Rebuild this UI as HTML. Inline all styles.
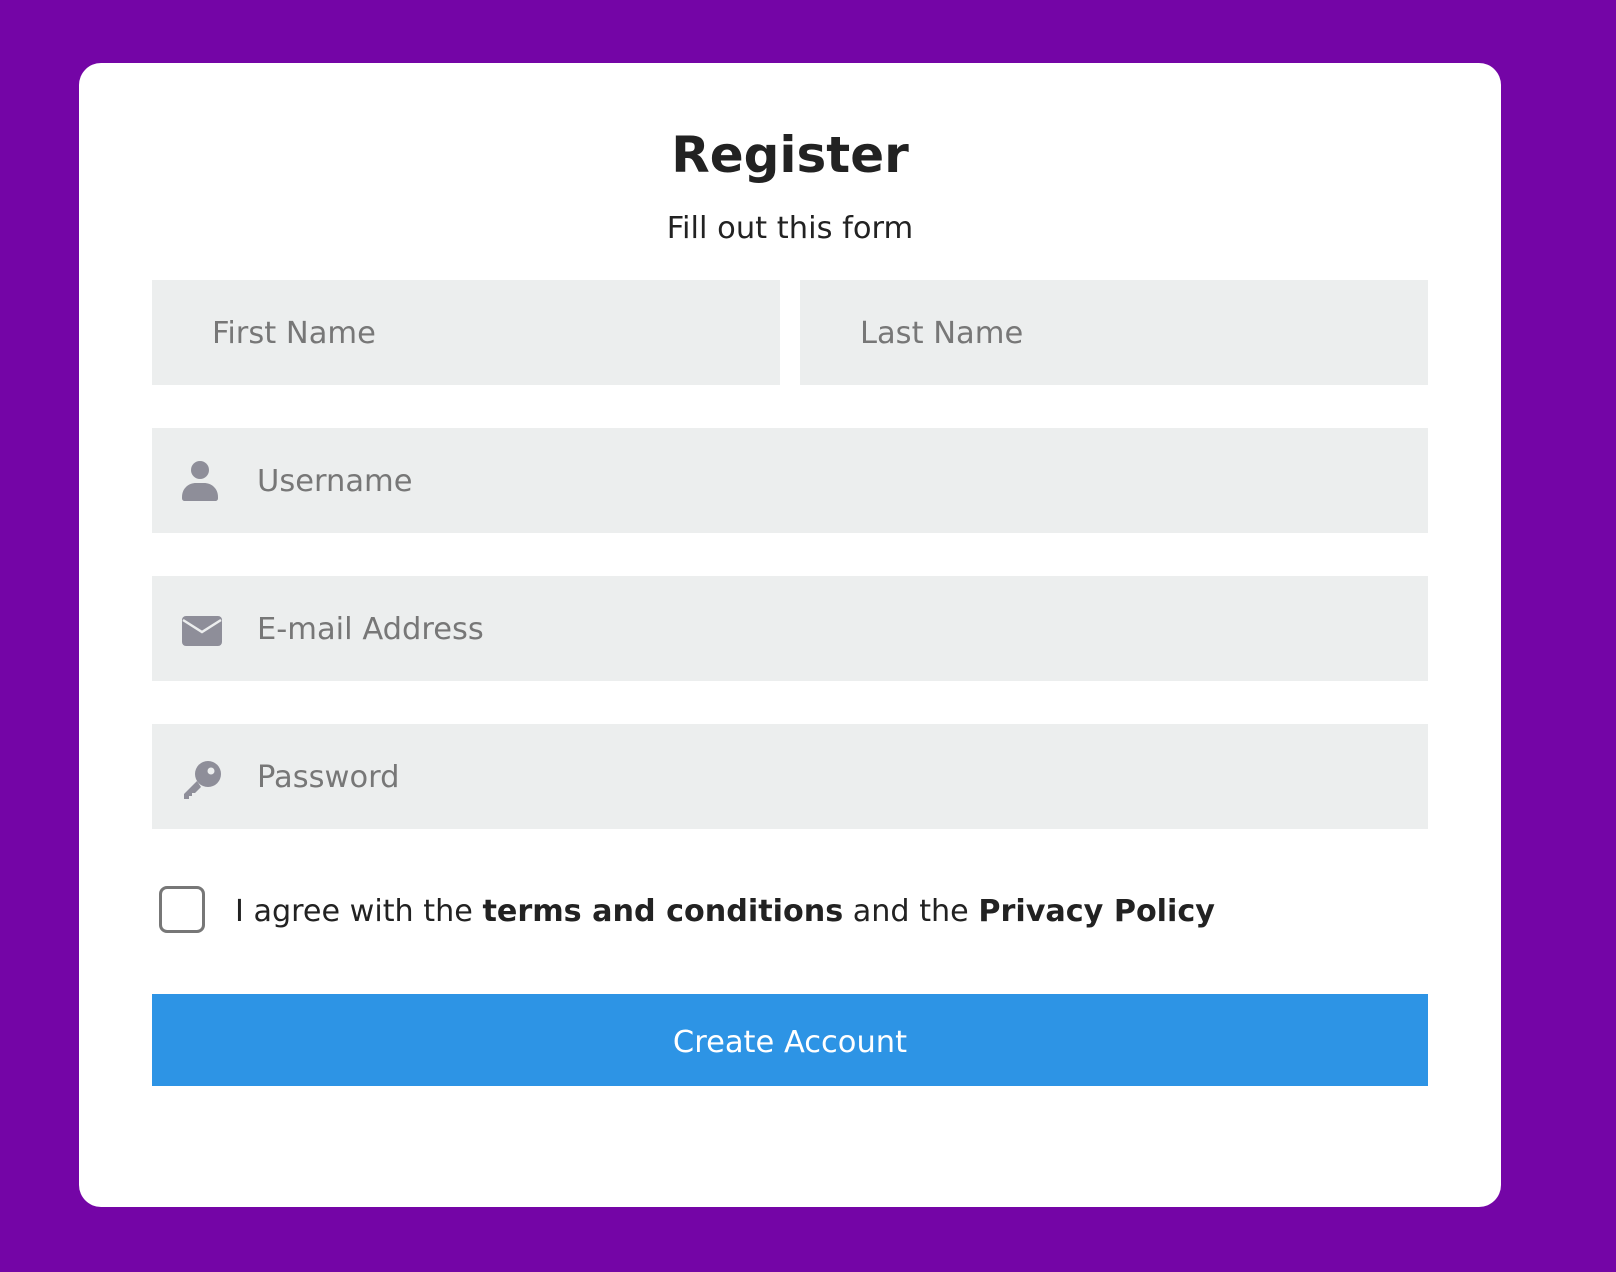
<!DOCTYPE html>
<html><head><meta charset="utf-8"><style>
*{margin:0;padding:0;box-sizing:border-box}
body{width:1616px;height:1272px;background:#7405a6;font-family:"DejaVu Sans","Liberation Sans",sans-serif;position:relative;overflow:hidden}
.card{position:absolute;left:79px;top:63px;width:1422px;height:1144px;background:#fff;border-radius:22px}
.abs{position:absolute}
h1{position:absolute;left:0;width:1580px;top:122px;text-align:center;font-size:50px;font-weight:bold;color:#222;line-height:66px}
.sub{position:absolute;left:0;width:1580px;top:211px;text-align:center;font-size:30.5px;color:#222;line-height:36px}
.in{position:absolute;background:#eceeee;color:#777;font-size:30.5px;line-height:40px}
.in span{position:absolute;top:50%;transform:translateY(-48%)}
.in svg{position:absolute}
</style></head><body>
<div class="card"></div>
<h1>Register</h1>
<div class="sub">Fill out this form</div>
<div class="in" style="left:152px;top:280px;width:628px;height:105px"><span style="left:60px">First Name</span></div>
<div class="in" style="left:800px;top:280px;width:628px;height:105px"><span style="left:60px">Last Name</span></div>
<div class="in" style="left:152px;top:428px;width:1276px;height:105px">
<svg style="left:30px;top:33px" width="36" height="40" viewBox="0 0 36 40"><circle cx="18" cy="9" r="9" fill="#8e8e99"/><path d="M0 36c0-9 7-14 14-14h8c7 0 14 5 14 14v1c0 2-1 3-3 3H3c-2 0-3-1-3-3z" fill="#8e8e99"/></svg>
<span style="left:105px">Username</span></div>
<div class="in" style="left:152px;top:576px;width:1276px;height:105px">
<svg style="left:30px;top:40px" width="40" height="30" viewBox="0 0 40 30"><rect x="0" y="0" width="40" height="30" rx="4" fill="#8e8e99"/><path d="M1 4l19 12 19-12" stroke="#eceeee" stroke-width="2.5" fill="none"/></svg>
<span style="left:105px">E-mail Address</span></div>
<div class="in" style="left:152px;top:724px;width:1276px;height:105px">
<svg style="left:30px;top:37px" width="40" height="40" viewBox="0 0 40 40"><circle cx="26" cy="13" r="13" fill="#8e8e99"/><circle cx="29" cy="10" r="3.5" fill="#eceeee"/><path d="M15 20L2 33v5h5v-3h3v-3h3l6-6z" fill="#8e8e99"/></svg>
<span style="left:105px">Password</span></div>
<div class="abs" style="left:159px;top:886px;width:46px;height:47px;border:3px solid #777;border-radius:8px"></div>
<div class="abs" style="left:235px;top:893px;font-size:30.2px;line-height:38px;color:#222">I agree with the <b>terms and conditions</b> and the <b>Privacy Policy</b></div>
<div class="abs" style="left:152px;top:994px;width:1276px;height:92px;background:#2d94e5;color:#fff;font-size:30.5px;line-height:98px;text-align:center">Create Account</div>
</body></html>
